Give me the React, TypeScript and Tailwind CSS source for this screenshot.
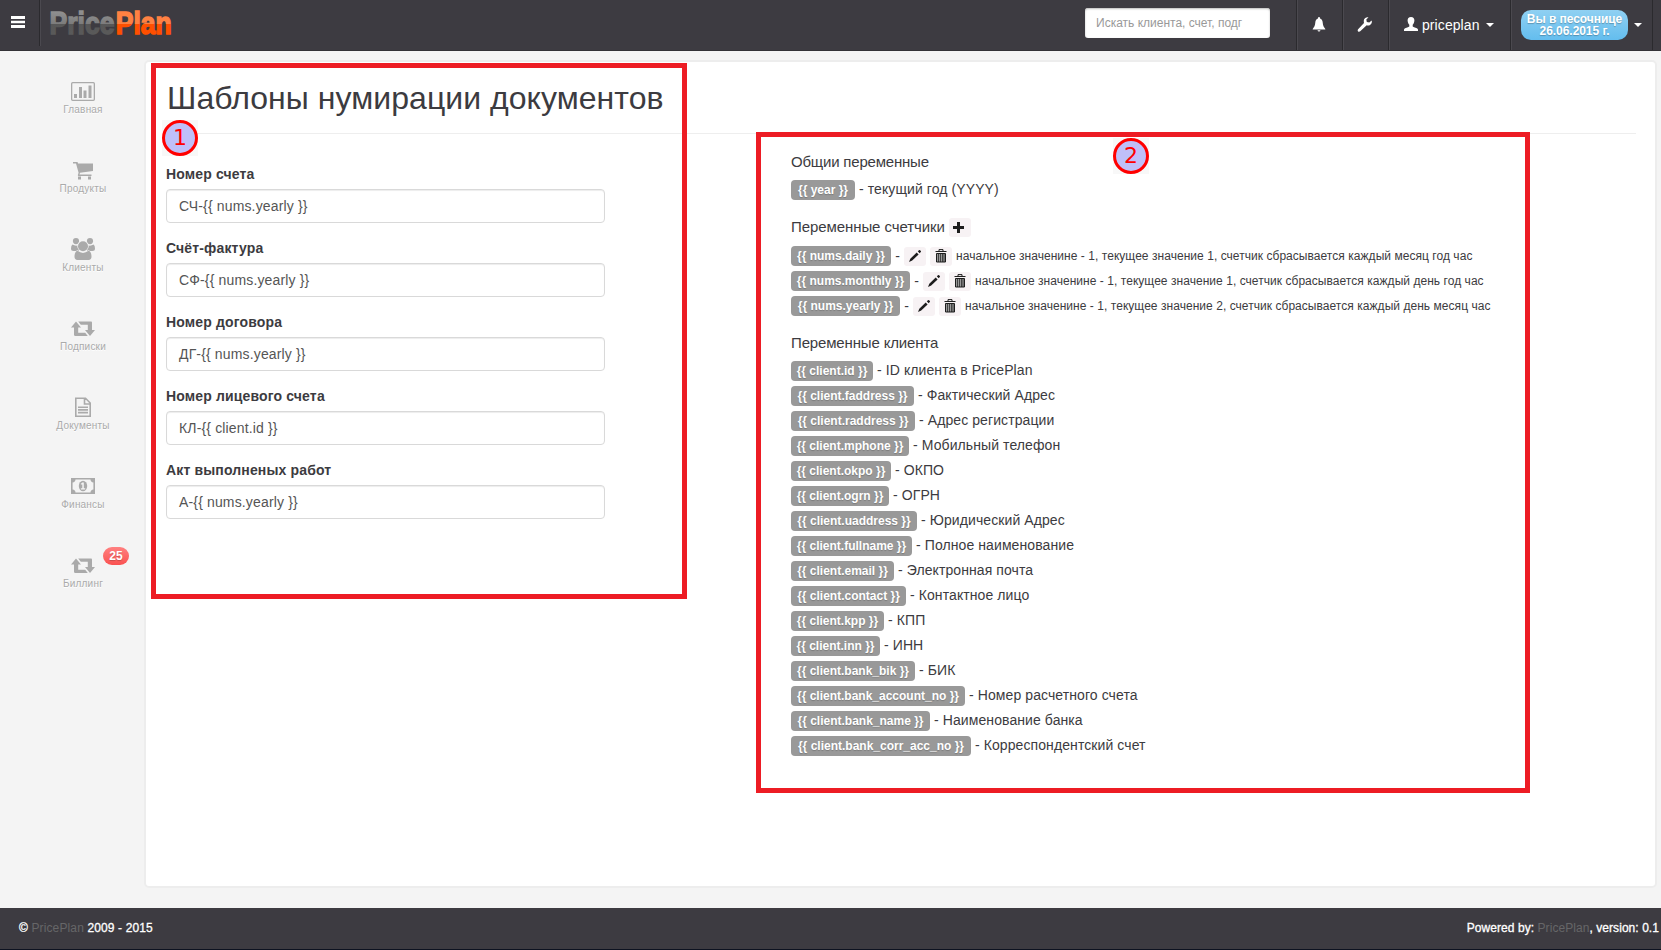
import React from "react";

function Retweet() {
  return (
    <svg width="24" height="24" viewBox="0 0 24 24" fill="#aaa">
      <path d="M5 5.500l5 6H7.200v5.200h7l2.600 3.200H4.200c-.8 0-1.200-.4-1.200-1.200V11.500H0zM19 20l-5-6h2.800V8.800h-7L7.200 5.500h12.600c.8 0 1.200.4 1.200 1.200v7.300h3z" />
    </svg>
  );
}

const icons: Record<string, React.ReactNode> = {
  chart: (
    <svg width="24" height="24" viewBox="0 0 24 24" fill="#aaa">
      <rect x=".65" y="3.650" width="22.700" height="17.700" rx="1" fill="none" stroke="#aaa" strokeWidth="1.300" />
      <path d="M3 15h3v4H3zM8 8h3v11H8zM12.500 11.500h3V19h-3zM17.500 6.500h3V19h-3z" />
    </svg>
  ),
  cart: (
    <svg width="24" height="24" viewBox="0 0 24 24" fill="#aaa">
      <path d="M2 4h4.500l.6 1.500H22V13L9 14.800l-.5 1.700H20.500V18H7.300L6.800 17.300l.8-2.600L5 5.500H2zM7 18.500h3v3H7zM17 18.500h3v3h-3z" />
    </svg>
  ),
  group: (
    <svg width="24" height="22" viewBox="0 0 24 22" fill="#aaa">
      <circle cx="5" cy="3.100" r="3.100" />
      <circle cx="19" cy="3.100" r="3.100" />
      <path d="M1.500 6.500Q4.500 8.500 8 7v6H2.500Q0 13 0 10.500 0 7.500 1.500 6.500zM22.500 6.500Q19.500 8.500 16 7v6h5.500q2.500 0 2.500-2.500 0-3-1.500-4z" />
      <path
        stroke="#f4f4f4"
        strokeWidth="1.200"
        paintOrder="stroke"
        d="M6.500 12.800Q12 17 17.500 12.800q3 .7 3 6 0 3-3 3.200h-11q-3-.2-3-3.200 0-5.300 3-6z"
      />
      <circle cx="12" cy="8.300" r="5" stroke="#f4f4f4" strokeWidth="1.400" paintOrder="stroke" />
    </svg>
  ),
  retweet: <Retweet />,
  doc: (
    <svg width="24" height="24" viewBox="0 0 24 24" fill="none" stroke="#aaa" strokeWidth="1.600">
      <path d="M4.800 3.300h9.700l4.700 4.700v13.200H4.800zM13.500 3.300V9h5.700M7 12.200h10M7 14.900h10M7 17.600h10" />
    </svg>
  ),
  money: (
    <svg width="24" height="24" viewBox="0 0 24 24">
      <path
        fill="#aaa"
        fillRule="evenodd"
        d="M0 4h24v16H0zM4.500 5.500A3.200 3.200 0 0 1 1.600 8.500v7A3.200 3.200 0 0 1 4.500 18.500h15a3.200 3.200 0 0 1 2.900-3v-7a3.200 3.200 0 0 1-2.900-3z"
      />
      <ellipse cx="12" cy="12" rx="4.200" ry="5.200" fill="#aaa" />
      <path fill="#f4f4f4" d="M11.300 8.500h1.500v5.700h1.400v1.300H9.900v-1.300h1.400v-3.600h-1.400V9.500q1 0 1.400-1z" />
    </svg>
  ),
};

const nav = [
  { icon: "chart", label: "Главная" },
  { icon: "cart", label: "Продукты" },
  { icon: "group", label: "Клиенты" },
  { icon: "retweet", label: "Подписки" },
  { icon: "doc", label: "Документы" },
  { icon: "money", label: "Финансы" },
  { icon: "retweet", label: "Биллинг", badge: "25" },
];

const fields = [
  ["Номер счета", "СЧ-{{ nums.yearly }}"],
  ["Счёт-фактура", "СФ-{{ nums.yearly }}"],
  ["Номер договора", "ДГ-{{ nums.yearly }}"],
  ["Номер лицевого счета", "КЛ-{{ client.id }}"],
  ["Акт выполненых работ", "А-{{ nums.yearly }}"],
];

type Variable = { name: string; width: number; text: string };

const counters: Variable[] = [
  { name: "nums.daily", width: 100, text: "начальное значенине - 1, текущее значение 1, счетчик сбрасывается каждый месяц год час" },
  { name: "nums.monthly", width: 119, text: "начальное значенине - 1, текущее значение 1, счетчик сбрасывается каждый день год час" },
  { name: "nums.yearly", width: 109, text: "начальное значенине - 1, текущее значение 2, счетчик сбрасывается каждый день месяц час" },
];

const clientVars: Variable[] = [
  { name: "client.id", width: 82, text: "ID клиента в PricePlan" },
  { name: "client.faddress", width: 123, text: "Фактический Адрес" },
  { name: "client.raddress", width: 124, text: "Адрес регистрации" },
  { name: "client.mphone", width: 118, text: "Мобильный телефон" },
  { name: "client.okpo", width: 100, text: "ОКПО" },
  { name: "client.ogrn", width: 98, text: "ОГРН" },
  { name: "client.uaddress", width: 126, text: "Юридический Адрес" },
  { name: "client.fullname", width: 121, text: "Полное наименование" },
  { name: "client.email", width: 103, text: "Электронная почта" },
  { name: "client.contact", width: 115, text: "Контактное лицо" },
  { name: "client.kpp", width: 93, text: "КПП" },
  { name: "client.inn", width: 89, text: "ИНН" },
  { name: "client.bank_bik", width: 124, text: "БИК" },
  { name: "client.bank_account_no", width: 174, text: "Номер расчетного счета" },
  { name: "client.bank_name", width: 139, text: "Наименование банка" },
  { name: "client.bank_corr_acc_no", width: 180, text: "Корреспондентский счет" },
];

function Tag({ name, width }: { name: string; width: number }) {
  return (
    <span
      style={{ width }}
      className="h-5 rounded-[4px] bg-[#999] text-center text-[12px] leading-5 font-bold text-white [text-shadow:0_1px_1px_rgba(0,0,0,0.2)]"
    >
      {"{{ " + name + " }}"}
    </span>
  );
}

function VarRow({ name, width, text }: Variable) {
  return (
    <div className="mb-[5px] flex h-5 items-center">
      <Tag name={name} width={width} />
      <span className="mb-0.5 ml-1 leading-5 tracking-[0.09px]">- {text}</span>
    </div>
  );
}

function MiniButton({ children }: { children: React.ReactNode }) {
  return (
    <button className="flex h-[19px] w-[22px] shrink-0 items-center justify-center rounded-[3px] bg-[#f7f2f4]">
      {children}
    </button>
  );
}

function Pencil() {
  return (
    <svg width="14" height="14" viewBox="0 0 14 14" fill="#1d1d1d" className="-ml-px">
      <path d="M8.700 3.500l1.900 1.900-6.400 6.200L1 13l1.300-3.200zM9.800 2.300l1.200-1.100q.6-.5 1.100 0l.7.7q.5.600 0 1.100l-1.200 1.200z" />
    </svg>
  );
}

function Trash() {
  return (
    <svg width="12" height="14" viewBox="0 0 12 14" fill="none" stroke="#1d1d1d" className="-ml-px">
      <path d="M4 2V.6h4V2M.5 2.500h11" />
      <path d="M1.500 4.500h9v8.500h-9z" fill="#999" />
      <path d="M3.500 5v8M5.500 5v8M7.500 5v8M9 5v8" strokeWidth=".7" />
    </svg>
  );
}

function Caret() {
  return <span className="border-x-4 border-t-4 border-x-transparent border-t-white" />;
}

function Marker({ n }: { n: string }) {
  return (
    <div className="bg-[#f8f8f8]">
      <div className="flex size-9 items-center justify-center rounded-full border-[3px] border-[#f00] bg-[#bfbff9] font-['DejaVu_Sans',sans-serif] text-[22px] leading-none text-[#f00]">
        {n}
      </div>
    </div>
  );
}

export default function App() {
  return (
    <div className="relative flex h-[950px] w-[1661px] flex-col overflow-hidden bg-[#f4f4f4] font-['Liberation_Sans',Arial,sans-serif] text-[14px] text-[#3c3b40]">
      <header className="flex h-[51px] shrink-0 border-b border-[#333237] bg-[#3d3b41] text-white">
        <div className="flex h-[46px] w-[40px] items-center border-r border-[#2b2a2e] pl-[11px] shadow-[1px_0_0_#4b494f]">
          <svg width="14" height="12" viewBox="0 0 14 12" fill="#fff" className="-mt-0.5">
            <path d="M0 0h14v3H0zM0 4.700h14v2.600H0zM0 9h14v3H0z" />
          </svg>
        </div>
        <svg width="140" height="50" viewBox="0 0 140 50" className="ml-2">
          <defs>
            <linearGradient id="gray" gradientUnits="userSpaceOnUse" x1="0" y1="12" x2="0" y2="36">
              <stop offset="0" stopColor="#8f8f8f" />
              <stop offset=".5" stopColor="#7c7c7c" />
              <stop offset=".5" stopColor="#575757" />
              <stop offset="1" stopColor="#5a5a5a" />
            </linearGradient>
            <linearGradient id="orange" gradientUnits="userSpaceOnUse" x1="0" y1="12" x2="0" y2="36">
              <stop offset="0" stopColor="#ff8142" />
              <stop offset=".5" stopColor="#ff8142" />
              <stop offset=".5" stopColor="#ff4f00" />
              <stop offset="1" stopColor="#ff4f00" />
            </linearGradient>
          </defs>
          <g transform="scale(0.843 1)" fontFamily="Liberation Sans" fontWeight="700" fontSize="31.500" strokeWidth="1.500">
            <text x="1.800" y="34.500" fill="url(#gray)" stroke="url(#gray)">Price</text>
            <text x="80.400" y="34.500" fill="url(#orange)" stroke="url(#orange)">Plan</text>
          </g>
        </svg>
        <div className="ml-auto flex">
          <div className="mt-2 mr-[26px] h-[30px] w-[185px] overflow-hidden rounded-[3px] bg-white pl-[11px] text-[12px] leading-[30px] whitespace-nowrap text-[#999] shadow-[inset_0_1px_2px_#bbb]">
            Искать клиента, счет, подг
          </div>
          <div className="flex w-[46px] items-center justify-center border-l border-[#2b2a2e] pr-0.5 shadow-[inset_1px_0_0_#4b494f]">
            <svg width="14" height="15" viewBox="0 0 14 15" fill="#fff" className="-mt-0.5">
              <path d="M6 1a1 1 0 0 1 2 0v.6c1.700.5 2.500 2 2.700 4 .2 3 1.100 4.600 2.600 6.400v.6H.7V12c1.500-1.800 2.400-3.400 2.600-6.400.2-2 1-3.500 2.700-4zM5.500 13.200h3q-.2 1.300-1.500 1.300t-1.500-1.300z" />
            </svg>
          </div>
          <div className="flex w-[46px] items-center justify-center border-l border-[#2b2a2e] pr-0.5 shadow-[inset_1px_0_0_#4b494f]">
            <svg width="15" height="15" viewBox="0 0 15 15" fill="#fff" className="-mt-0.5">
              <path d="M11.500.3L9.300 2.600l.5 2.500 2.500.5 2.300-2.200c.8 2-.2 4-1.900 4.800-1.100.5-2.200.4-3 .1L3.200 14.300c-.6.600-1.500.6-2.100.1s-.5-1.400 0-2.100L7 6C6.500 3.700 6.900 2.200 8.200 1.100c1-.9 2.300-1.100 3.300-.8z" />
            </svg>
          </div>
          <div className="flex w-[122px] items-center border-l border-[#2b2a2e] pl-[15px] shadow-[inset_1px_0_0_#4b494f]">
            <svg width="14" height="14" viewBox="0 0 14 14" fill="#fff" className="-mt-[3px]">
              <path d="M7 0c2.300 0 3.500 1.500 3.400 3.600C10.300 5.500 9.600 7 8.700 7.800v1.700c1.600 1 4.300 1.200 5.100 2.600.2.500.2 1.100.2 1.900H0c0-.8 0-1.400.2-1.900.8-1.400 3.500-1.600 5.100-2.600V7.800C4.400 7 3.700 5.500 3.600 3.600 3.500 1.500 4.700 0 7 0z" />
            </svg>
            <span className="mr-[6px] ml-[4px] text-[14px] tracking-[0.08px]">priceplan</span>
            <Caret />
          </div>
          <div className="flex w-[143px] items-center border-x border-[#2b2a2e] pl-2.5 shadow-[inset_1px_0_0_#4b494f]">
            <div className="mr-1.5 h-[30px] w-[107px] rounded-[10px] bg-linear-to-b from-[#8fd0f2] to-[#63bdee] pt-[3px] text-center text-[12px] leading-[12px] font-bold tracking-[-0.05px] whitespace-nowrap [text-shadow:0_1px_1px_rgba(0,0,0,0.25)]">
              Вы в песочнице
              <br />
              26.06.2015 г.
            </div>
            <Caret />
          </div>
          <div className="w-2" />
        </div>
      </header>

      <div className="flex h-[857px] shrink-0">
        <nav className="flex w-[144px] flex-col items-center pt-[28px] pl-[22px] text-[#aaa]">
          {nav.map((item, i) => (
            <a key={i} className="relative flex h-[79px] w-20 flex-col items-center">
              <span className="flex h-6 items-center">{icons[item.icon]}</span>
              <span className="text-[10px] leading-[14px] tracking-[0.2px] [text-shadow:0_1px_0_#fff]">{item.label}</span>
              {item.badge && (
                <span className="absolute top-[-6px] left-[60px] flex h-[18px] w-[26px] items-center justify-center rounded-full bg-linear-to-b from-[#ff8080] to-[#fa5050] text-[12px] font-bold text-white [text-shadow:0_1px_1px_rgba(0,0,0,0.2)]">
                  {item.badge}
                </span>
              )}
            </a>
          ))}
        </nav>

        <main className="mt-[9px] flex h-[828px] w-[1513px] flex-col rounded-[5px] border-2 border-[#ededed] bg-white pl-5">
          <div className="h-[72px] w-[1470px] border-b border-[#eee] pt-4">
            <h1 className="pl-px text-[32px] leading-[40px] tracking-[0.05px] whitespace-nowrap">Шаблоны нумирации документов</h1>
          </div>
          <div className="flex">
            <form className="w-[439px] pt-[30px]">
              {fields.map(([label, value]) => (
                <div key={label} className="mb-[15px] flex flex-col gap-[5px]">
                  <label className="h-5 leading-5 font-bold tracking-[0.15px] whitespace-nowrap">{label}</label>
                  <div className="h-[34px] rounded-[4px] border border-[#d9d9d9] px-3 leading-8 tracking-[0.15px] text-[#555] shadow-[inset_0_1px_1px_rgba(0,0,0,0.075)]">
                    {value}
                  </div>
                </div>
              ))}
            </form>
            <section className="ml-[186px] pt-[18px] whitespace-nowrap">
              <h2 className="mb-[8px] h-5 text-[15px] leading-5 tracking-[-0.2px]">Общии переменные</h2>
              <VarRow name="year" width={64} text="текущий год (YYYY)" />
              <div className="mt-[17px] mb-[9px] flex h-5 items-center">
                <h2 className="w-[158px] text-[15px] tracking-[-0.08px]">Переменные счетчики</h2>
                <MiniButton>
                  <svg width="11" height="11" viewBox="0 0 11 11" fill="#1d1d1d" className="-ml-[3px]">
                    <path d="M4 0h3v4h4v3H7v4H4V7H0V4h4z" />
                  </svg>
                </MiniButton>
              </div>
              {counters.map(({ name, width, text }) => (
                <div key={name} className="mb-[5px] flex h-5 items-center">
                  <Tag name={name} width={width} />
                  <span className="w-[13px] text-center">-</span>
                  <div className="flex gap-1">
                    <MiniButton>
                      <Pencil />
                    </MiniButton>
                    <MiniButton>
                      <Trash />
                    </MiniButton>
                  </div>
                  <span className="ml-1 text-[12px] tracking-[0.045px]">{text}</span>
                </div>
              ))}
              <h2 className="mt-[17px] mb-[8px] h-5 text-[15px] leading-5 tracking-[-0.15px]">Переменные клиента</h2>
              {clientVars.map((v) => (
                <VarRow key={v.name} {...v} />
              ))}
            </section>
          </div>
        </main>
      </div>

      <footer className="flex h-[42px] shrink-0 justify-between border-b border-[#0d1220] bg-[#3d3b41] pr-[2px] pl-[19px] text-[12px] leading-[40px] text-white">
        <span className="tracking-[0.13px] [-webkit-text-stroke:0.3px]">
          © <span className="text-[#666668] [-webkit-text-stroke:0]">PricePlan</span> 2009 - 2015
        </span>
        <span className="tracking-[0.06px] [-webkit-text-stroke:0.3px]">
          Powered by: <span className="text-[#666668] [-webkit-text-stroke:0]">PricePlan</span>, version: 0.1
        </span>
      </footer>

      <div className="absolute top-[63px] left-[151px] h-[536px] w-[536px] border-[5px] border-[#ed1c24]" />
      <div className="absolute top-[132px] left-[756px] h-[661px] w-[774px] border-[5px] border-[#ed1c24]" />
      <div className="absolute top-[120px] left-[162px]">
        <Marker n="1" />
      </div>
      <div className="absolute top-[138px] left-[1113px]">
        <Marker n="2" />
      </div>
    </div>
  );
}
